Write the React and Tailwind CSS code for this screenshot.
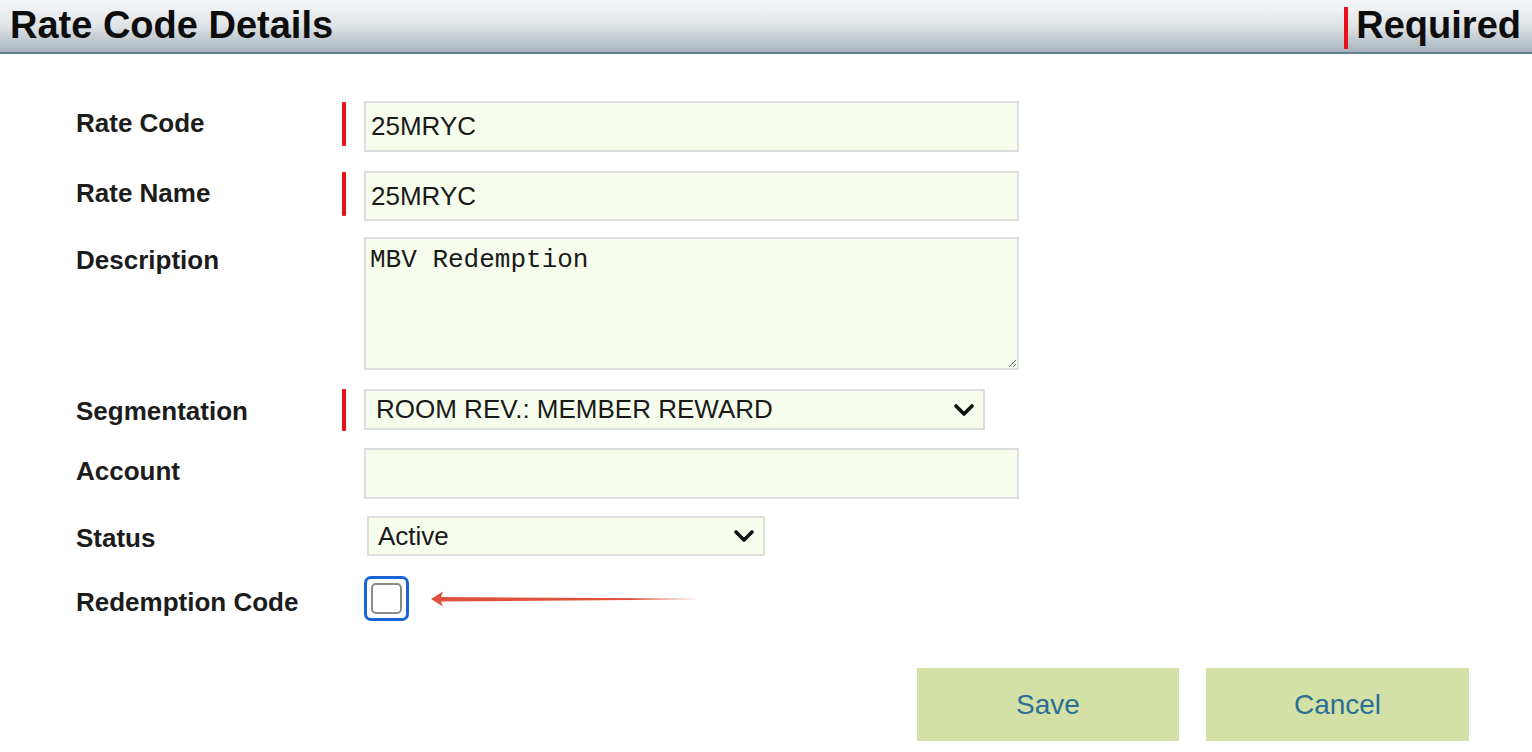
import React from 'react'

const font = { fontFamily: '"Liberation Sans", Arial, sans-serif' }

const RedBar = ({ show, h }) => (
  <div className="w-[22px] shrink-0">
    {show && <div className={`w-[4px] bg-[#e8101a] rounded-[1px] ${h}`} />}
  </div>
)

const Chevron = () => (
  <svg width="22" height="14" viewBox="0 0 22 14" className="shrink-0">
    <path d="M3 3 L11 11 L19 3" fill="none" stroke="#111" strokeWidth="3.6" strokeLinecap="round" strokeLinejoin="round" />
  </svg>
)

const Label = ({ children, pt = 'pt-[7px]' }) => (
  <div className={`w-[266px] shrink-0 text-[26px] leading-[30px] font-bold text-[#1c1c1c] ${pt}`}>
    {children}
  </div>
)

const App = () => {
  return (
    <div className="w-[1532px] h-[752px] bg-white overflow-hidden" style={font}>
      {/* header bar */}
      <div className="h-[54px] flex items-start justify-between bg-gradient-to-b from-[#f6f7f8] via-[#dfe4e7] to-[#a7b4bd] border-b-[2px] border-[#5d7e8c]">
        <h1 className="pl-[10px] pt-[3px] text-[38px] leading-[44px] font-bold text-[#0d0d0d]">Rate Code Details</h1>
        <div className="flex items-start pr-[11px] pt-[7px]">
          <div className="w-[4px] h-[42px] bg-[#e8101a]" />
          <span className="ml-[8px] -mt-[4px] text-[38px] leading-[44px] font-bold text-[#0d0d0d]">Required</span>
        </div>
      </div>

      <div className="pl-[76px] pt-[47px]">
        {/* Rate Code */}
        <div className="flex items-start">
          <Label>Rate Code</Label>
          <RedBar show h="h-[44px] mt-[1px]" />
          <div className="w-[655px] h-[51px] bg-[#f6fdec] border-2 border-[#dedede] px-[5px] flex items-center text-[26px] text-[#1a1a1a]">25MRYC</div>
        </div>

        {/* Rate Name */}
        <div className="flex items-start mt-[19px]">
          <Label>Rate Name</Label>
          <RedBar show h="h-[44px] mt-[1px]" />
          <div className="w-[655px] h-[50px] bg-[#f6fdec] border-2 border-[#dedede] px-[5px] flex items-center text-[26px] text-[#1a1a1a]">25MRYC</div>
        </div>

        {/* Description */}
        <div className="flex items-start mt-[16px]">
          <Label pt="pt-[8px]">Description</Label>
          <RedBar show={false} />
          <textarea
            readOnly
            defaultValue="MBV Redemption"
            className="w-[655px] h-[133px] bg-[#f6fdec] border-2 border-[#dedede] px-[4px] pt-[6px] text-[26px] leading-[30px] text-[#1a1a1a] outline-none"
            style={{ fontFamily: '"Liberation Mono", "Courier New", monospace', resize: 'both' }}
          />
        </div>

        {/* Segmentation */}
        <div className="flex items-start mt-[19px]">
          <Label>Segmentation</Label>
          <RedBar show h="h-[42px]" />
          <div className="w-[621px] h-[41px] bg-[#f6fdec] border-2 border-[#dedede] pl-[10px] pr-[8px] flex items-center justify-between text-[26px] text-[#1a1a1a]">
            <span>ROOM REV.: MEMBER REWARD</span>
            <Chevron />
          </div>
        </div>

        {/* Account */}
        <div className="flex items-start mt-[17px]">
          <Label pt="pt-[8px]">Account</Label>
          <RedBar show={false} />
          <div className="w-[655px] h-[51px] bg-[#f6fdec] border-2 border-[#dedede]" />
        </div>

        {/* Status */}
        <div className="flex items-start mt-[17px]">
          <Label>Status</Label>
          <RedBar show={false} />
          <div className="ml-[3px] w-[398px] h-[40px] bg-[#f6fdec] border-2 border-[#dedede] pl-[9px] pr-[8px] flex items-center justify-between text-[26px] text-[#1a1a1a]">
            <span>Active</span>
            <Chevron />
          </div>
        </div>

        {/* Redemption Code */}
        <div className="flex items-start mt-[20px]">
          <Label pt="pt-[11px]">Redemption Code</Label>
          <RedBar show={false} />
          <div className="flex items-center">
            <div className="w-[45px] h-[45px] rounded-[7px] border-[3px] border-[#1b64d8] bg-white flex items-center justify-center">
              <div className="w-[31px] h-[31px] rounded-[5px] border-2 border-[#8a8a8a] bg-white" />
            </div>
            <svg width="266" height="18" viewBox="0 0 266 18" className="ml-[22px]">
              <defs>
                <linearGradient id="arrowFade" x1="0" x2="1" y1="0" y2="0">
                  <stop offset="0" stopColor="#e0513d" />
                  <stop offset="0.75" stopColor="#e0513d" />
                  <stop offset="1" stopColor="#e0513d" stopOpacity="0.2" />
                </linearGradient>
              </defs>
              <polygon points="0,9 12,1.5 10,7 264,8.6 264,9.4 10,11.5 12,16.5" fill="url(#arrowFade)" />
            </svg>
          </div>
        </div>

        {/* buttons */}
        <div className="flex justify-end gap-[27px] pr-[63px] mt-[47px]">
          <button className="w-[262px] h-[73px] bg-[#d3e1a6] text-[28px] text-[#2b6f97]">Save</button>
          <button className="w-[263px] h-[73px] bg-[#d3e1a6] text-[28px] text-[#2b6f97]">Cancel</button>
        </div>
      </div>
    </div>
  )
}

export default App
